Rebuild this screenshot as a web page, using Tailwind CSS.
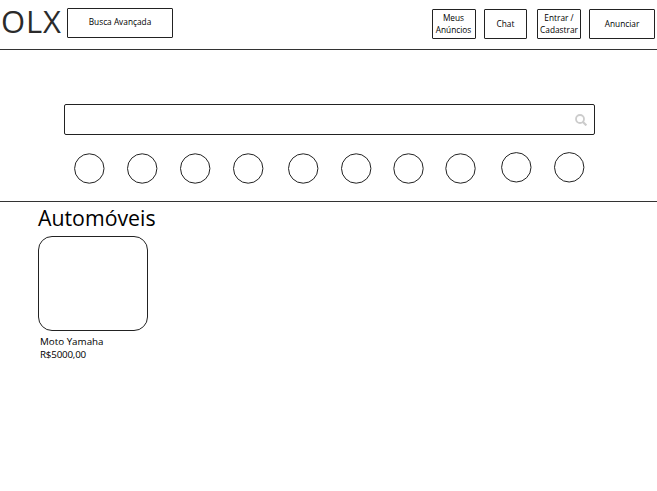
<!DOCTYPE html>
<html lang="pt-BR">
<head>
<meta charset="utf-8">
<title>OLX</title>
<script src="https://cdn.jsdelivr.net/npm/@tailwindcss/browser@4"></script>
</head>
<body class="w-[657px] h-[491px] overflow-hidden bg-white text-black font-['Open_Sans','Noto_Sans',sans-serif]">
<header class="flex items-start h-[50px] pl-px pr-[2px] border-b border-[#333]">
  <h1 class="w-[66px] pt-px text-[31px] tracking-[0.8px] leading-[41px] text-[#2b2b2b] whitespace-nowrap">OLX</h1>
  <button class="mt-2 w-[106px] h-[30px] border border-[#222] rounded-[1px] text-[8.3px] leading-[12px] pb-[2px]">Busca Avançada</button>
  <nav class="ml-auto mt-[9px] flex h-[30px] text-[8.3px] leading-[12px]">
    <button class="w-[44px] pr-px flex justify-center items-center border border-[#222] rounded-[1px] whitespace-nowrap">Meus<br>Anúncios</button>
    <button class="ml-2 w-[43px] border border-[#222] rounded-[1px]">Chat</button>
    <button class="ml-[10px] w-[44px] flex justify-center items-center border border-[#222] rounded-[1px] whitespace-nowrap">Entrar /<br>Cadastrar</button>
    <button class="ml-2 w-[66px] border border-[#222] rounded-[1px]">Anunciar</button>
  </nav>
</header>
<section class="h-[152px] pt-[54px] border-b border-[#333]">
  <div class="ml-16 w-[531px] h-[31px] flex items-center justify-end pr-[7px] border border-[#222] rounded-[2px]">
    <svg class="w-3 h-3 mt-px" viewBox="0 0 12 12" fill="none" stroke="#ccc" stroke-width="1.8"><circle cx="5" cy="5" r="4"/><path d="M8 8l3.4 3.4" stroke-width="2.2"/></svg>
  </div>
  <div class="flex pl-[74px] pt-[17px]">
    <svg class="w-[31px] h-[32px] shrink-0 mt-px" viewBox="0 0 31 32" fill="none" stroke="#222"><circle cx="15.3" cy="15.5" r="14.7"/></svg>
    <svg class="w-[31px] h-[32px] shrink-0 mt-px ml-[22px]" viewBox="0 0 31 32" fill="none" stroke="#222"><circle cx="15.2" cy="15.5" r="14.7"/></svg>
    <svg class="w-[31px] h-[32px] shrink-0 mt-px ml-[22px]" viewBox="0 0 31 32" fill="none" stroke="#222"><circle cx="15.2" cy="15.5" r="14.7"/></svg>
    <svg class="w-[31px] h-[32px] shrink-0 mt-px ml-[22px]" viewBox="0 0 31 32" fill="none" stroke="#222"><circle cx="15.2" cy="15.5" r="14.7"/></svg>
    <svg class="w-[31px] h-[32px] shrink-0 mt-px ml-[24px]" viewBox="0 0 31 32" fill="none" stroke="#222"><circle cx="15.2" cy="15.5" r="14.7"/></svg>
    <svg class="w-[31px] h-[32px] shrink-0 mt-px ml-[22px]" viewBox="0 0 31 32" fill="none" stroke="#222"><circle cx="15.2" cy="15.5" r="14.7"/></svg>
    <svg class="w-[31px] h-[32px] shrink-0 mt-px ml-[21px]" viewBox="0 0 31 32" fill="none" stroke="#222"><circle cx="15.5" cy="15.5" r="14.7"/></svg>
    <svg class="w-[31px] h-[32px] shrink-0 mt-px ml-[21px]" viewBox="0 0 31 32" fill="none" stroke="#222"><circle cx="15.5" cy="15.5" r="14.7"/></svg>
    <svg class="w-[31px] h-[32px] shrink-0 ml-[25px]" viewBox="0 0 31 32" fill="none" stroke="#222"><circle cx="15.3" cy="15.3" r="14.7"/></svg>
    <svg class="w-[31px] h-[32px] shrink-0 ml-[22px]" viewBox="0 0 31 32" fill="none" stroke="#222"><circle cx="15.2" cy="15.3" r="14.7"/></svg>
  </div>
</section>
<main class="pl-[38px]">
  <h2 class="h-[34px] text-[21.3px] leading-[32px] text-black">Automóveis</h2>
  <article>
    <div class="w-[110px] h-[95px] border border-[#222] rounded-[14px]"></div>
    <p class="pl-[2px] pt-1 text-[9.8px] leading-[13px]">Moto Yamaha<br><span class="tracking-[-0.2px]">R$5000,00</span></p>
  </article>
</main>
</body>
</html>
